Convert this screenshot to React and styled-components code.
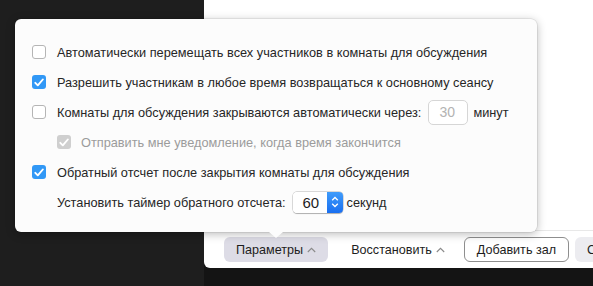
import React from 'react'
import styled, { createGlobalStyle } from 'styled-components'

const GlobalStyle = createGlobalStyle`
    body {
        margin: 0;
        background: #1e1e1e;
        font-family: "Liberation Sans", Arial, sans-serif;
    }
`

const Screen = styled.div`
    position: relative;
    width: 593px;
    height: 286px;
    display: flex;
    overflow: hidden;
    background: #1e1e1e;
`

const LeftGap = styled.div`
    flex: none;
    width: 204px;
`

const RightColumn = styled.div`
    flex: 1;
    display: flex;
    flex-direction: column;
    background: #141414;
`

const Window = styled.div`
    height: 268px;
    background: #ffffff;
    border-bottom-left-radius: 6px;
    display: flex;
    flex-direction: column;
    overflow: hidden;
`

const WindowBody = styled.div`
    flex: 1;
`

const Toolbar = styled.div`
    height: 37px;
    border-top: 1px solid #e8e8e8;
    display: flex;
    align-items: center;
    padding-left: 20px;
    white-space: nowrap;
`

const ToolButton = styled.div`
    flex: none;
    height: 25px;
    box-sizing: border-box;
    display: flex;
    align-items: center;
    font-size: 12.6px;
    color: #1d1d1d;
    border-radius: 6px;
    padding: ${p => (p.$plain ? '0' : '0 12px')};
    margin-left: ${p => p.$gap || 0}px;
    background: ${p => p.$bg || 'transparent'};
    border: ${p => (p.$outline ? '1px solid #8e8e8e' : 'none')};
`

const Chevron = styled.svg`
    margin-left: 4px;
    width: 9px;
    height: 6px;
`

const Popover = styled.div`
    position: absolute;
    left: 15px;
    top: 19px;
    width: 522px;
    box-sizing: border-box;
    padding: 18px 17px 15px 17px;
    background: #fcfcfc;
    border-radius: 6px;
    box-shadow: 0 0 0 0.5px rgba(0, 0, 0, 0.12),
        0 2px 10px rgba(0, 0, 0, 0.28);

    &::after {
        content: '';
        position: absolute;
        left: 254px;
        bottom: -6px;
        width: 0;
        height: 0;
        border-left: 7px solid transparent;
        border-right: 7px solid transparent;
        border-top: 6px solid #fcfcfc;
    }
`

const Row = styled.div`
    height: 30px;
    display: flex;
    align-items: center;
    padding-left: ${p => p.$indent || 0}px;
    font-size: 12.75px;
    color: ${p => (p.$disabled ? '#9b9b9b' : '#262626')};
    white-space: nowrap;
`

const Box = styled.span`
    flex: none;
    width: 14px;
    height: 14px;
    box-sizing: border-box;
    border-radius: 3px;
    margin-right: ${p => (p.$small ? 10 : 11)}px;
    display: flex;
    align-items: center;
    justify-content: center;
    background: ${p =>
        p.$disabled ? '#cfcfcf' : p.$checked ? '#3198f6' : '#ffffff'};
    border: ${p =>
        p.$checked || p.$disabled ? 'none' : '1px solid #b5b5b5'};
`

const NumberField = styled.span`
    flex: none;
    width: 40px;
    height: 25px;
    box-sizing: border-box;
    margin: 0 5px 0 7px;
    border: 1px solid #d6d6d6;
    border-radius: 5px;
    display: flex;
    align-items: center;
    padding-left: 10px;
    font-size: 14px;
    color: #b3b3b3;
    background: #ffffff;
`

const Stepper = styled.span`
    flex: none;
    width: 50px;
    height: 21px;
    margin: 0 4px 0 7px;
    display: flex;
    border-radius: 4px;
    overflow: hidden;
    box-shadow: 0 0 0 0.5px rgba(0, 0, 0, 0.25), 0 0.5px 1px rgba(0, 0, 0, 0.2);
`

const StepperValue = styled.span`
    flex: 1;
    display: flex;
    align-items: center;
    padding-left: 10px;
    font-size: 15px;
    color: #1d1d1d;
    background: #ffffff;
`

const StepperArrows = styled.span`
    flex: none;
    width: 16px;
    display: flex;
    align-items: center;
    justify-content: center;
    background: linear-gradient(#3f9cfb, #1a6ff0);
`

const Check = ({ color = '#fff' }) => (
    <svg width="10" height="9" viewBox="0 0 10 9">
        <path
            d="M1.3 4.8 L3.8 7.3 L8.8 1.5"
            fill="none"
            stroke={color}
            strokeWidth="1.9"
            strokeLinecap="round"
            strokeLinejoin="round"
        />
    </svg>
)

const Checkbox = ({ checked, disabled, small }) => (
    <Box $checked={checked} $disabled={disabled} $small={small}>
        {(checked || disabled) && <Check />}
    </Box>
)

const UpChevron = () => (
    <Chevron viewBox="0 0 9 6">
        <path
            d="M0.8 5 L4.5 1.3 L8.2 5"
            fill="none"
            stroke="#8a8a8a"
            strokeWidth="1.1"
        />
    </Chevron>
)

const App = () => (
    <>
        <GlobalStyle />
        <Screen>
            <LeftGap />
            <RightColumn>
                <Window>
                    <WindowBody />
                    <Toolbar>
                        <ToolButton $bg="#dddce6">
                            Параметры
                            <UpChevron />
                        </ToolButton>
                        <ToolButton $plain $gap={23}>
                            Восстановить
                            <UpChevron />
                        </ToolButton>
                        <ToolButton $outline $gap={19}>
                            Добавить зал
                        </ToolButton>
                        <ToolButton $bg="#ececf0" $gap={6}>
                            Создать
                        </ToolButton>
                    </Toolbar>
                </Window>
            </RightColumn>

            <Popover>
                <Row>
                    <Checkbox />
                    Автоматически перемещать всех участников в комнаты для
                    обсуждения
                </Row>
                <Row>
                    <Checkbox checked />
                    Разрешить участникам в любое время возвращаться к основному
                    сеансу
                </Row>
                <Row>
                    <Checkbox />
                    Комнаты для обсуждения закрываются автоматически через:
                    <NumberField>30</NumberField>
                    минут
                </Row>
                <Row $indent={25} $disabled>
                    <Checkbox disabled small />
                    Отправить мне уведомление, когда время закончится
                </Row>
                <Row>
                    <Checkbox checked />
                    Обратный отсчет после закрытия комнаты для обсуждения
                </Row>
                <Row $indent={25}>
                    Установить таймер обратного отсчета:
                    <Stepper>
                        <StepperValue>60</StepperValue>
                        <StepperArrows>
                            <svg width="8" height="12" viewBox="0 0 8 12">
                                <path
                                    d="M1.2 4.3 L4 1.5 L6.8 4.3 M1.2 7.7 L4 10.5 L6.8 7.7"
                                    fill="none"
                                    stroke="#fff"
                                    strokeWidth="1.3"
                                />
                            </svg>
                        </StepperArrows>
                    </Stepper>
                    секунд
                </Row>
            </Popover>
        </Screen>
    </>
)

export default App
